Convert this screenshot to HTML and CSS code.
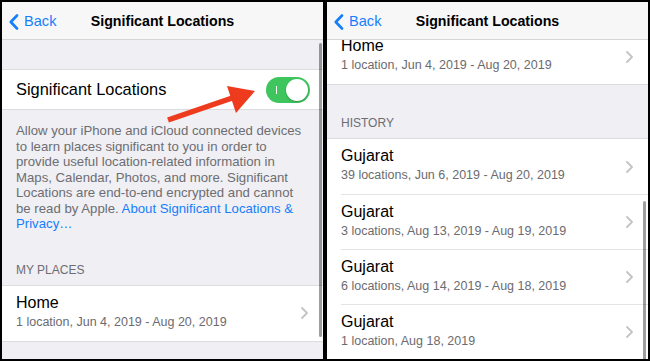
FILE: index.html
```html
<!DOCTYPE html>
<html>
<head>
<meta charset="utf-8">
<link rel="stylesheet" href="styles.css">
</head>
<body>
<div class="frame">
  <section class="panel">
    <header class="nav">
      <div class="back">
        <svg class="back-chev" width="10" height="16" viewBox="0 0 10 16"><polyline points="8,1.5 1.8,8 8,14.5" fill="none" stroke="#157efb" stroke-width="2.6" stroke-linecap="round" stroke-linejoin="round"/></svg>
        <span>Back</span>
      </div>
      <div class="title">Significant Locations</div>
      <div></div>
    </header>
    <div class="content">
      <div class="spacer"></div>
      <div class="group">
        <div class="toggle-row">
          <span class="toggle-label">Significant Locations</span>
          <span class="switch"><span class="switch-mark"></span><span class="knob"></span></span>
        </div>
      </div>
      <p class="footer">Allow your iPhone and iCloud connected devices to learn places significant to you in order to provide useful location-related information in Maps, Calendar, Photos, and more. Significant Locations are end-to-end encrypted and cannot be read by Apple. <span class="link">About Significant Locations &amp; Privacy…</span></p>
      <div class="section-header">MY PLACES</div>
      <div class="group">
        <div class="cell">
          <div class="cell-text">
            <div class="cell-title">Home</div>
            <div class="cell-sub">1 location, Jun 4, 2019 - Aug 20, 2019</div>
          </div>
          <svg class="chev" width="7" height="12" viewBox="0 0 7 12"><polyline points="1,1 6,6 1,11" fill="none" stroke="#c4c4c8" stroke-width="1.8" stroke-linecap="round" stroke-linejoin="round"/></svg>
        </div>
      </div>
    </div>
    <div class="scrollbar scrollbar-left"></div>
    <svg class="arrow" width="321" height="357" viewBox="0 0 321 357">
      <line x1="166" y1="118" x2="236" y2="94" stroke="#ee3b1d" stroke-width="5.5" stroke-linecap="butt"/>
      <polygon points="225,84 253,89 234,111" fill="#ee3b1d"/>
    </svg>
  </section>

  <section class="panel">
    <header class="nav">
      <div class="back">
        <svg class="back-chev" width="10" height="16" viewBox="0 0 10 16"><polyline points="8,1.5 1.8,8 8,14.5" fill="none" stroke="#157efb" stroke-width="2.6" stroke-linecap="round" stroke-linejoin="round"/></svg>
        <span>Back</span>
      </div>
      <div class="title">Significant Locations</div>
      <div></div>
    </header>
    <div class="content">
      <div class="scrolled">
        <div class="group">
          <div class="cell">
            <div class="cell-text">
              <div class="cell-title">Home</div>
              <div class="cell-sub">1 location, Jun 4, 2019 - Aug 20, 2019</div>
            </div>
            <svg class="chev" width="7" height="12" viewBox="0 0 7 12"><polyline points="1,1 6,6 1,11" fill="none" stroke="#c4c4c8" stroke-width="1.8" stroke-linecap="round" stroke-linejoin="round"/></svg>
          </div>
        </div>
        <div class="section-header">HISTORY</div>
        <div class="group">
          <div class="cell">
            <div class="cell-text">
              <div class="cell-title">Gujarat</div>
              <div class="cell-sub">39 locations, Jun 6, 2019 - Aug 20, 2019</div>
            </div>
            <svg class="chev" width="7" height="12" viewBox="0 0 7 12"><polyline points="1,1 6,6 1,11" fill="none" stroke="#c4c4c8" stroke-width="1.8" stroke-linecap="round" stroke-linejoin="round"/></svg>
          </div>
          <div class="cell">
            <div class="cell-text">
              <div class="cell-title">Gujarat</div>
              <div class="cell-sub">3 locations, Aug 13, 2019 - Aug 19, 2019</div>
            </div>
            <svg class="chev" width="7" height="12" viewBox="0 0 7 12"><polyline points="1,1 6,6 1,11" fill="none" stroke="#c4c4c8" stroke-width="1.8" stroke-linecap="round" stroke-linejoin="round"/></svg>
          </div>
          <div class="cell">
            <div class="cell-text">
              <div class="cell-title">Gujarat</div>
              <div class="cell-sub">6 locations, Aug 14, 2019 - Aug 18, 2019</div>
            </div>
            <svg class="chev" width="7" height="12" viewBox="0 0 7 12"><polyline points="1,1 6,6 1,11" fill="none" stroke="#c4c4c8" stroke-width="1.8" stroke-linecap="round" stroke-linejoin="round"/></svg>
          </div>
          <div class="cell">
            <div class="cell-text">
              <div class="cell-title">Gujarat</div>
              <div class="cell-sub">1 location, Aug 18, 2019</div>
            </div>
            <svg class="chev" width="7" height="12" viewBox="0 0 7 12"><polyline points="1,1 6,6 1,11" fill="none" stroke="#c4c4c8" stroke-width="1.8" stroke-linecap="round" stroke-linejoin="round"/></svg>
          </div>
        </div>
      </div>
    </div>
    <div class="scrollbar scrollbar-right"></div>
  </section>
</div>
</body>
</html>
```

FILE: styles.css
```css
* { box-sizing: border-box; }
html, body { margin: 0; padding: 0; }
body {
  width: 650px;
  height: 361px;
  background: #000;
  font-family: "Liberation Sans", Arial, sans-serif;
  overflow: hidden;
}
.frame {
  display: flex;
  gap: 4px;
  padding: 2px;
  width: 650px;
  height: 361px;
}
.panel {
  position: relative;
  width: 321px;
  height: 357px;
  background: #efeff4;
  overflow: hidden;
  display: flex;
  flex-direction: column;
}
.nav {
  flex: none;
  height: 38px;
  background: #f7f7f8;
  border-bottom: 1px solid #d6d6da;
  display: grid;
  grid-template-columns: 1fr auto 1fr;
  align-items: center;
  position: relative;
  z-index: 2;
}
.back {
  display: flex;
  align-items: center;
  gap: 5px;
  padding-left: 7px;
  color: #157efb;
  font-size: 14.6px;
  padding-top: 1px;
}
.back-chev { display: block; margin-top: 1px; }
.title {
  font-weight: bold;
  font-size: 14.2px;
  color: #000;
  padding-top: 1px;
}
.content {
  flex: 1;
  overflow: hidden;
}
.spacer { height: 29px; }
.group {
  background: #fff;
  border-top: 1px solid #dcdce0;
  border-bottom: 1px solid #dcdce0;
}
.toggle-row {
  height: 39px;
  display: flex;
  align-items: center;
  justify-content: space-between;
  padding: 0 13px 0 14px;
}
.toggle-label {
  font-size: 16.4px;
  color: #000;
}
.switch {
  position: relative;
  width: 44px;
  height: 26px;
  border-radius: 13px;
  background: #3ec55e;
}
.switch-mark {
  position: absolute;
  left: 10px;
  top: 9px;
  width: 1px;
  height: 8px;
  background: #fff;
}
.knob {
  position: absolute;
  right: 2px;
  top: 2px;
  width: 22px;
  height: 22px;
  border-radius: 50%;
  background: #fff;
  box-shadow: 0 1px 2px rgba(0,0,0,0.25);
}
.footer {
  margin: 0;
  padding: 13px 16px 0 14px;
  font-size: 13.2px;
  line-height: 15.5px;
  color: #6d6d72;
}
.link { color: #157efb; }
.section-header {
  padding: 31px 14px 7px 14px;
  font-size: 12px;
  line-height: 15px;
  color: #6d6d72;
}
.cell {
  height: 55px;
  display: flex;
  align-items: center;
  justify-content: space-between;
  padding: 0 15px 0 14px;
  position: relative;
}
.cell + .cell { border-top: 1px solid #e4e4e7; margin-left: 14px; padding-left: 0; }
.cell-text {
  display: flex;
  flex-direction: column;
  margin-top: -3px;
}
.cell-title {
  font-size: 16px;
  line-height: 20px;
  color: #000;
}
.cell-sub {
  font-size: 12.5px;
  line-height: 18px;
  color: #6b6b6f;
}
.chev { display: block; }
.scrolled { margin-top: -12px; }
.scrollbar {
  position: absolute;
  width: 3px;
  border-radius: 1.5px;
  background: rgba(0,0,0,0.38);
  z-index: 3;
}
.scrollbar-left { left: 317px; top: 41px; height: 294px; }
.scrollbar-right { left: 316px; top: 199px; height: 170px; }
.arrow {
  position: absolute;
  left: 0;
  top: 0;
  z-index: 4;
  pointer-events: none;
}
```
